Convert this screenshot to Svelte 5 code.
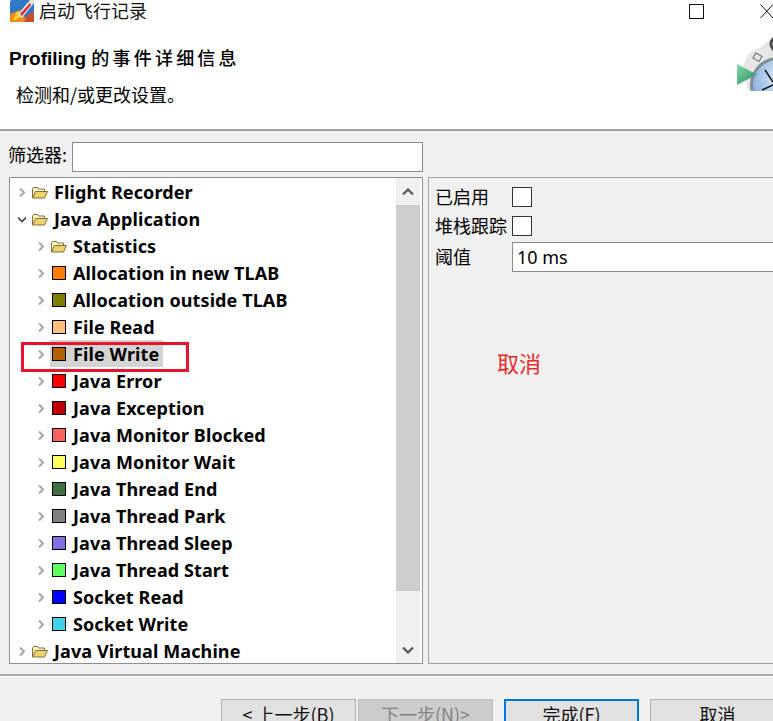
<script>
  const children = [
    { label: 'Statistics', folder: true },
    { label: 'Allocation in new TLAB', color: '#ff8000' },
    { label: 'Allocation outside TLAB', color: '#808000' },
    { label: 'File Read', color: '#ffc080' },
    { label: 'File Write', color: '#b06000', selected: true },
    { label: 'Java Error', color: '#ff0000' },
    { label: 'Java Exception', color: '#c00000' },
    { label: 'Java Monitor Blocked', color: '#ff6060' },
    { label: 'Java Monitor Wait', color: '#ffff60' },
    { label: 'Java Thread End', color: '#407040' },
    { label: 'Java Thread Park', color: '#808080' },
    { label: 'Java Thread Sleep', color: '#8070e0' },
    { label: 'Java Thread Start', color: '#60ff60' },
    { label: 'Socket Read', color: '#0000ff' },
    { label: 'Socket Write', color: '#40d0e8' }
  ];
</script>

{#snippet folder()}
  <svg class="folder" width="16" height="12" viewBox="0 0 16 12">
    <path d="M0.5 11V1.5l1-1h4l1 1.5h6v2.5" fill="#fbf3c4" stroke="#7d6f3c"/>
    <path d="M0.5 11l3-6.5h12l-3 6.5z" fill="#efd26c" stroke="#7d6f3c"/>
  </svg>
{/snippet}

{#snippet closedArrow()}
  <svg class="arrow" width="9" height="11" viewBox="0 0 9 11"><path d="M3 1.5l4 4-4 4" fill="none" stroke="#a6a6a6" stroke-width="2"/></svg>
{/snippet}

<div class="page">
  <header class="head">
    <div class="titlebar">
      <svg class="appicon" width="24" height="22" viewBox="0 0 24 22">
        <rect width="24" height="22" rx="2" fill="#2f78c8"/>
        <path d="M0 22V14L10 10l8 12z" fill="#f08a1c"/>
        <path d="M3 21l4-10 6 5z" fill="#fbd23a"/>
        <path d="M8 14L20 0h4v3L12 18z" fill="#e8e2de"/>
        <path d="M10 14L20 3l1 2L12 16z" fill="#d22f2a"/>
        <path d="M14 22l4-8 6-2v10z" fill="#c9502e"/>
      </svg>
      <span class="apptitle">启动飞行记录</span>
      <span class="winbtns">
        <span class="maxbtn"></span>
        <svg class="closebtn" width="13" height="15" viewBox="0 0 13 15"><path d="M0.5 0.5L13 14M13 0.5L0.5 14" stroke="#111" fill="none"/></svg>
      </span>
    </div>
    <div class="banner">
      <div class="bannertext">
        <h1>Profiling <span class="h1cjk">的事件详细信息</span></h1>
        <p>检测和/或更改设置。</p>
      </div>
      <svg class="wizard" width="37" height="56" viewBox="0 0 37 56">
        <defs>
          <radialGradient id="dial" cx="0.6" cy="0.35" r="0.8">
            <stop offset="0" stop-color="#eef5fc"/>
            <stop offset="1" stop-color="#6f9fd8"/>
          </radialGradient>
          <linearGradient id="play" x1="0" y1="0" x2="1" y2="1">
            <stop offset="0" stop-color="#8ad8ac"/>
            <stop offset="1" stop-color="#1f8a5c"/>
          </linearGradient>
        </defs>
        <path d="M7 30l6-12 12-6 12-10v54H12z" fill="#e6e6e6"/>
        <rect x="18" y="19" width="7" height="6" fill="#e4e4e4" stroke="#666" transform="rotate(30 21 22)"/>
        <circle cx="42" cy="9" r="7" fill="none" stroke="#4a4a4a" stroke-width="3"/>
        <circle cx="42" cy="50" r="28" fill="#858b92"/>
        <circle cx="42" cy="50" r="25" fill="url(#dial)"/>
        <path d="M29 35l8 12M26 55l11-5" stroke="#111" stroke-width="1.4"/>
        <path d="M1 29L21 39.5 1 50z" fill="url(#play)"/>
      </svg>
    </div>
  </header>

  <main class="body">
    <div class="filter">
      <label for="flt">筛选器:</label>
      <input id="flt" type="text" />
    </div>

    <div class="split">
      <section class="tree">
        <div class="rows">
          <div class="row lvl0">{@render closedArrow()}{@render folder()}<span class="txt">Flight Recorder</span></div>
          <div class="row lvl0">
            <svg class="arrow" width="9" height="11" viewBox="0 0 9 11"><path d="M1 3.5l4 4 4-4" fill="none" stroke="#444" stroke-width="1.6"/></svg>
            {@render folder()}<span class="txt">Java Application</span>
          </div>
          {#each children as c}
            <div class="row lvl1">
              {@render closedArrow()}
              {#if c.folder}
                {@render folder()}
              {:else}
                <span class="sw" style="background:{c.color}"></span>
              {/if}
              <span class="txt" class:sel={c.selected}>{c.label}</span>
            </div>
          {/each}
          <div class="row lvl0">{@render closedArrow()}{@render folder()}<span class="txt">Java Virtual Machine</span></div>
        </div>
        <div class="scroll">
          <div class="sbtn">
            <svg width="12" height="8" viewBox="0 0 12 8"><path d="M1 6.5l5-5 5 5" fill="none" stroke="#555" stroke-width="2.2"/></svg>
          </div>
          <div class="thumb"></div>
          <div class="track"></div>
          <div class="sbtn">
            <svg width="12" height="8" viewBox="0 0 12 8"><path d="M1 1.5l5 5 5-5" fill="none" stroke="#555" stroke-width="2.2"/></svg>
          </div>
        </div>
      </section>

      <section class="props">
        <div class="prop"><span class="plabel">已启用</span><span class="check"></span></div>
        <div class="prop"><span class="plabel">堆栈跟踪</span><span class="check"></span></div>
        <div class="prop third"><span class="plabel">阈值</span><input class="val" type="text" value="10 ms" /></div>
      </section>
    </div>
  </main>

  <footer class="foot">
    <button>&lt; 上一步(B)</button>
    <button class="disabled">下一步(N)&gt;</button>
    <button class="primary">完成(F)</button>
    <button>取消</button>
  </footer>

  <div class="redbox"></div>
  <div class="redtext">取消</div>
</div>

<style>
  :global(body) { margin: 0; background: #f0f0f0; }
  .page {
    position: relative;
    width: 773px;
    height: 721px;
    overflow: hidden;
    background: #f0f0f0;
    display: flex;
    flex-direction: column;
    font-family: "Noto Sans", "Noto Sans CJK SC", sans-serif;
    color: #000;
  }
  .head {
    height: 131px;
    box-sizing: border-box;
    background: #fff;
    border-bottom: 2px solid #a0a0a0;
    flex: none;
    overflow: hidden;
  }
  .titlebar {
    height: 22px;
    display: flex;
    align-items: center;
    padding-left: 10px;
    font-size: 18px;
  }
  .appicon { flex: none; }
  .apptitle { margin: -3px 0 0 5px; font-family: "Noto Sans CJK SC", sans-serif; line-height: 22px; color: #111; }
  .winbtns { margin-left: auto; display: flex; align-items: center; gap: 56px; }
  .maxbtn { width: 13px; height: 13px; border: 1px solid #111; }
  .closebtn { display: block; }
  .banner {
    display: flex;
    justify-content: space-between;
    height: 107px;
  }
  .bannertext { padding: 23px 0 0 9px; }
  h1 {
    margin: 0;
    font-size: 19px;
    line-height: 24px;
    font-weight: 700;
    font-family: "Liberation Sans", "Noto Sans CJK SC", sans-serif;
  }
  .h1cjk { font-size: 18px; letter-spacing: 3.2px; font-family: "Noto Sans CJK SC", sans-serif; font-weight: 500; }
  .bannertext p {
    margin: 11px 0 0 7px;
    font-size: 18px;
    line-height: 24px;
    font-family: "Noto Sans CJK SC", sans-serif;
  }
  .wizard { margin-top: 13px; flex: none; }

  .body { flex: none; height: 542px; padding: 11px 0 0 9px; box-sizing: border-box; }
  .filter { display: flex; align-items: center; height: 30px; width: 414px; }
  .filter label { font-size: 18px; width: 64px; margin-left: -1px; flex: none; font-family: "Noto Sans CJK SC", sans-serif; padding-bottom: 6px; white-space: nowrap; }
  .filter input {
    flex: 1;
    min-width: 0;
    height: 30px;
    box-sizing: border-box;
    border: 1px solid #8a8a8a;
    background: #fff;
    margin: 0;
    padding: 0;
  }
  .split { display: flex; margin-top: 5px; gap: 5px; height: 487px; }
  .tree {
    flex: none;
    width: 414px;
    box-sizing: border-box;
    border: 1px solid #8f8f8f;
    background: #fff;
    display: flex;
    overflow: hidden;
  }
  .rows { flex: 1; min-width: 0; }
  .row {
    height: 27px;
    display: flex;
    align-items: center;
    font-size: 18px;
    letter-spacing: 0.1px;
    font-weight: 700;
    white-space: nowrap;
  }
  .lvl0 { padding-left: 7px; }
  .lvl1 { padding-left: 26px; }
  .arrow { flex: none; margin: 2px 6px 0 0; }
  .folder { flex: none; margin: 2px 6px 0 0; }
  .sw {
    flex: none;
    width: 12px;
    height: 12px;
    border: 1px solid #000;
    margin: 1px 7px 0 1px;
    position: relative;
    z-index: 1;
  }
  .txt { line-height: 25px; padding-top: 2px; }
  .sel { background: #d4d4d4; margin-left: -23px; padding: 2px 4px 0 23px; }
  .scroll {
    flex: none;
    width: 24px;
    margin-right: 2px;
    background: #f0f0f0;
    display: flex;
    flex-direction: column;
  }
  .sbtn { height: 27px; display: flex; align-items: center; justify-content: center; flex: none; }
  .thumb { flex: none; height: 386px; background: #cdcdcd; }
  .track { flex: 1; }

  .props {
    flex: none;
    width: 400px;
    box-sizing: border-box;
    border: 1px solid #a0a0a0;
    background: #f0f0f0;
    padding: 4px 0 0 7px;
    font-family: "Noto Sans CJK SC", sans-serif;
  }
  .prop { display: flex; align-items: center; height: 29px; font-size: 18px; }
  .plabel { width: 77px; margin: -2px 0 0 -1px; flex: none; line-height: 22px; white-space: nowrap; }
  .check { width: 18px; height: 18px; border: 1px solid #333; background: #fff; box-sizing: content-box; }
  .third { margin-top: 2px; height: 30px; }
  .val {
    width: 320px;
    height: 30px;
    box-sizing: border-box;
    border: 1px solid #8a8a8a;
    background: #fff;
    padding: 0 4px;
    margin: 0;
    font-size: 18px;
    font-family: "Noto Sans", sans-serif;
    color: #000;
  }

  .foot {
    flex: none;
    box-sizing: border-box;
    border-top: 2px solid #a8a8a8;
    box-shadow: inset 0 1px 0 #fff;
    height: 48px;
    margin-top: 1px;
    padding: 23px 0 0 221px;
    display: flex;
    gap: 2px;
  }
  .foot button {
    flex: none;
    width: 135px;
    height: 36px;
    box-sizing: border-box;
    border: 1px solid #adadad;
    background: #e1e1e1;
    margin: 0;
    padding: 0 0 6px;
    font-size: 18px;
    line-height: 24px;
    font-family: "Noto Sans CJK SC", sans-serif;
    color: #111;
  }
  .foot .disabled { background: #cccccc; border-color: #bfbfbf; color: #838383; }
  .foot .primary { border: 2px solid #0078d7; margin-left: 9px; }
  .foot .primary + button { margin-left: 9px; }

  .redbox {
    position: absolute;
    left: 21px;
    top: 342px;
    width: 168px;
    height: 30px;
    box-sizing: border-box;
    border: 3px solid #e8132a;
  }
  .redtext {
    position: absolute;
    left: 497px;
    top: 347px;
    font-size: 22px;
    line-height: 30px;
    color: #e62c2c;
    font-family: "Noto Sans CJK SC", sans-serif;
  }
</style>
